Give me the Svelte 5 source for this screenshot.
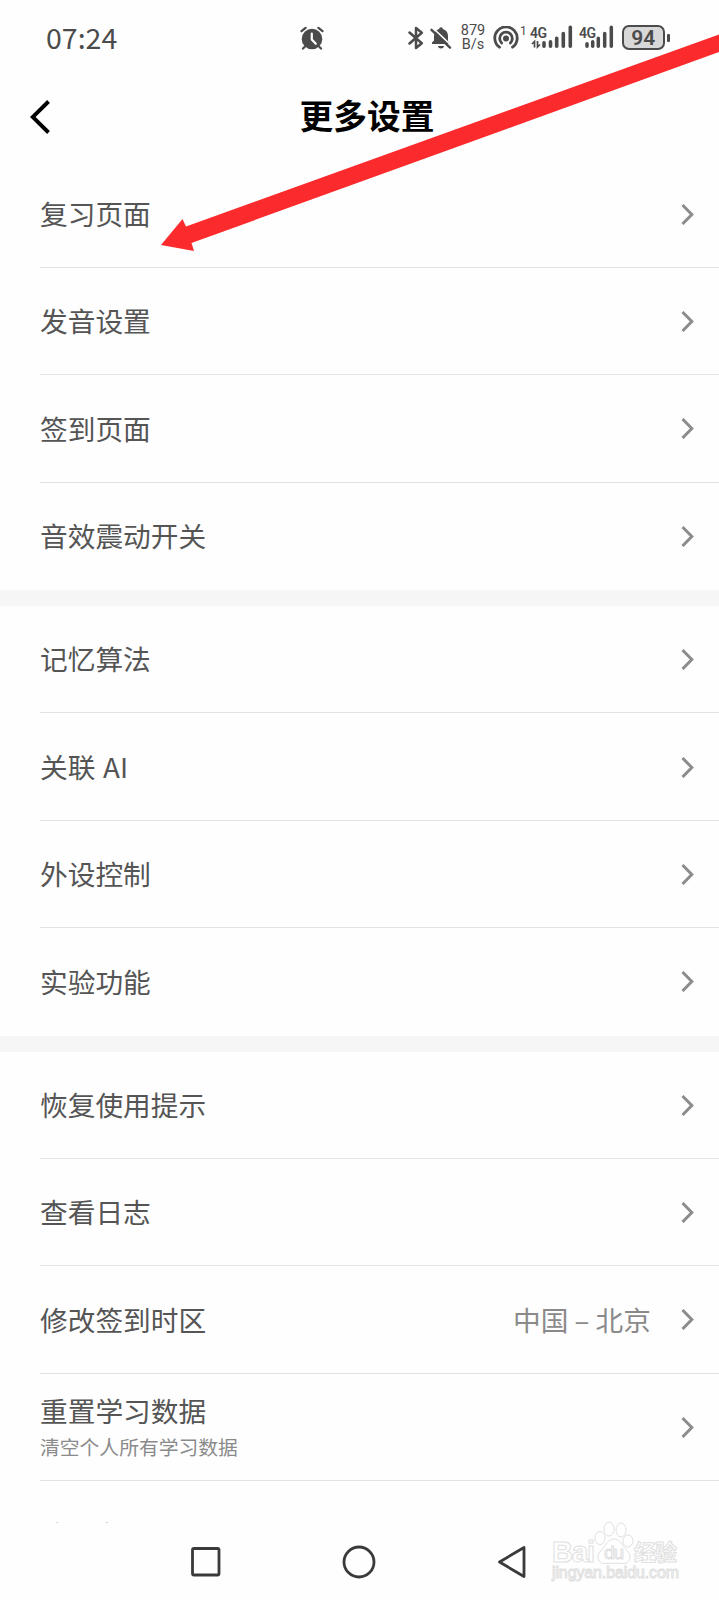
<script lang="ts">
	type Item = { label: string; value?: string; note?: string; partial?: boolean };

	const groups: Item[][] = [
		[{ label: '复习页面' }, { label: '发音设置' }, { label: '签到页面' }, { label: '音效震动开关' }],
		[{ label: '记忆算法' }, { label: '关联 AI' }, { label: '外设控制' }, { label: '实验功能' }],
		[
			{ label: '恢复使用提示' },
			{ label: '查看日志' },
			{ label: '修改签到时区', value: '中国 – 北京' },
			{ label: '重置学习数据', note: '清空个人所有学习数据' },
			{ label: '清缓存', partial: true }
		]
	];
</script>

<div class="screen">
	<header class="status">
		<span class="time">07:24</span>
		<svg class="alarm" width="24" height="24" viewBox="0 0 24 24">
			<circle cx="12" cy="13" r="10.3" fill="#4b4b4b" />
			<path d="M1.5 5.2 5.6 1.8M22.5 5.2 18.4 1.8M5 20.5 3 22.6M19 20.5l2 2.1" stroke="#4b4b4b" stroke-width="2.2" stroke-linecap="round" />
			<path d="M11.8 7.5v6.1l4 4.2" fill="none" stroke="#fff" stroke-width="2.2" stroke-linecap="round" />
		</svg>
		<div class="indicators">
			<svg width="16" height="24" viewBox="0 0 16 24">
				<path d="M1.5 6.5 13.8 17.3 8 22V2l5.8 4.7L1.5 17.5" fill="none" stroke="#4b4b4b" stroke-width="2.5" stroke-linejoin="round" stroke-linecap="round" />
			</svg>
			<svg class="bell" width="22" height="24" viewBox="0 0 22 24">
				<path d="M11 1.2c1.2 0 1.8.8 1.8 1.8 3.4.9 5.2 3.4 5.2 7v5l2 3H2v-1.4l2-2V10c0-3.6 1.8-6.1 5.2-7 0-1 .6-1.8 1.8-1.8z" fill="#4b4b4b" />
				<path d="M8 20h6c-.4 1.8-1.4 2.5-3 2.5S8.4 21.8 8 20z" fill="#4b4b4b" />
				<path d="M3.500 2.500 22 20.200" stroke="#fff" stroke-width="1.600" />
				<path d="M1.5 3.8 20 21.6" stroke="#4b4b4b" stroke-width="2.4" stroke-linecap="round" />
			</svg>
			<span class="speed"><span>879</span><span>B/s</span></span>
			<svg class="hotspot" width="26" height="24" viewBox="0 0 26 24">
				<g fill="none" stroke="#4b4b4b" stroke-width="2.8" stroke-linecap="round">
					<path d="M6.5 21.2a11.2 11.2 0 1 1 13 0" />
					<path d="M8.6 16.9a6.3 6.3 0 1 1 8.8 0" />
				</g>
				<circle cx="13" cy="12.5" r="3" fill="#4b4b4b" />
			</svg>
			<sup class="count">1</sup>
			<svg class="signal" width="44" height="28" viewBox="0 0 44 28">
				<text x="0" y="13.5" font-size="14" textLength="17">4G</text>
				<path d="M4.5 23.5v-6L2 20M7.5 17v6l2.5-2.5" fill="none" stroke="#4b4b4b" stroke-width="1.7" />
				<path d="M14 22.2v-3.5M20.5 22.2v-4.5M26.7 22.2v-8M33.3 22.2V9.5M40.3 22.2V3.3" stroke="#4b4b4b" stroke-width="3.6" stroke-linecap="round" />
			</svg>
			<svg class="signal second" width="36" height="28" viewBox="0 0 36 28">
				<text x="0" y="13.5" font-size="14" textLength="17">4G</text>
				<path d="M8 22.2v-2.5M13.7 22.2v-4.5M19.3 22.2v-8M25.7 22.2V9.5M32.3 22.2V3.3" stroke="#4b4b4b" stroke-width="3.5" stroke-linecap="round" />
			</svg>
			<span class="battery">94</span>
			<span class="nub"></span>
		</div>
	</header>

	<nav class="titlebar">
		<svg width="20" height="34" viewBox="0 0 20 34">
			<path d="M18.5 1.5 2.7 17l15.8 15.5" fill="none" stroke="#000" stroke-width="3.9" />
		</svg>
		<h1>更多设置</h1>
	</nav>

	<main>
		{#each groups as group}
			<section>
				{#each group as item}
					<div class="row" class:partial={item.partial}>
						<div class="label">
							<span>{item.label}</span>
							{#if item.note}<small>{item.note}</small>{/if}
						</div>
						{#if item.value}<span class="value">{item.value}</span>{/if}
						<svg width="14" height="22" viewBox="0 0 14 22">
							<path d="M1.5 2 10.800 11.500 1.500 21" fill="none" stroke="#8c8c8c" stroke-width="3" />
						</svg>
					</div>
				{/each}
			</section>
		{/each}
	</main>

	<footer>
		<svg width="30" height="30" viewBox="0 0 30 30">
			<rect x="1.5" y="1.5" width="26.5" height="26.5" rx="1.5" />
		</svg>
		<svg width="34" height="34" viewBox="0 0 34 34">
			<circle cx="17" cy="17" r="15" />
		</svg>
		<svg width="30" height="34" viewBox="0 0 30 34">
			<path d="M27 2.5v29L2.5 17z" stroke-linejoin="round" />
		</svg>
	</footer>

	<svg class="arrow" width="719" height="260" viewBox="0 0 719 260">
		<path d="M161 245 182.5 219l3.5 7.5L719 34.5V52L191.5 243l2.5 8z" fill="#fb2b2d" />
	</svg>

	<svg class="watermark" width="140" height="70" viewBox="0 0 140 70">
		<g fill="#fff" stroke="#e0e0e0" stroke-width="1">
			<text x="1" y="41" font-size="29" font-weight="bold" textLength="43">Bai</text>
			<ellipse cx="49" cy="17" rx="5" ry="6.5" />
			<ellipse cx="58" cy="8" rx="5" ry="7" />
			<ellipse cx="70" cy="9" rx="5" ry="7" />
			<ellipse cx="77" cy="20" rx="5" ry="6" />
			<path d="M63 18c5 0 7 4 10 8s6 6 6 10c0 5-4 7-8 6.5-5-.5-11-.5-16 0-5 .5-8-2-8-6.5 0-4 3-6 6-10s5-8 10-8z" />
			<text x="53" y="38" font-size="19" textLength="20">du</text>
			<text class="cjk" x="83" y="39" font-size="22" font-weight="bold" textLength="43">经验</text>
			<text x="1" y="57" font-size="16" textLength="127">jingyan.baidu.com</text>
		</g>
	</svg>
</div>

<style>
	:global(body) {
		margin: 0;
		background: #fefefe;
	}

	.screen {
		position: relative;
		display: flex;
		flex-direction: column;
		width: 719px;
		height: 1600px;
		overflow: hidden;
		background: #fefefe;
		font-family: 'Noto Sans CJK SC', sans-serif;
		color: #555;
	}

	.status {
		display: flex;
		align-items: center;
		height: 75px;
		flex: none;
		padding-left: 46px;
		box-sizing: border-box;
		font-family: Roboto, sans-serif;
		color: #4b4b4b;
	}

	.time {
		width: 254px;
		margin-top: -2px;
		font-family: 'Noto Sans CJK SC', sans-serif;
		font-size: 28.5px;
		line-height: 40px;
	}

	.indicators {
		display: flex;
		align-items: center;
		margin-left: 84px;
	}

	.bell {
		margin-left: 6px;
	}

	.speed {
		display: flex;
		flex-direction: column;
		align-items: center;
		width: 24px;
		margin-left: 9px;
		font-size: 14.5px;
		line-height: 14px;
	}

	.hotspot {
		margin-left: 8px;
	}

	.count {
		margin: -14px 0 0 1px;
		font-size: 12px;
		line-height: 12px;
	}

	.signal {
		margin-left: 3px;
		font-family: Roboto, sans-serif;
		font-weight: 600;
		fill: #4b4b4b;
	}

	.second {
		margin-left: 5px;
	}

	.battery {
		width: 43px;
		height: 25px;
		margin-left: 7px;
		border: 2px solid #4b4b4b;
		border-radius: 7px;
		box-sizing: border-box;
		background: #d8d8d8;
		font-size: 21px;
		font-weight: 600;
		line-height: 22px;
		text-align: center;
	}

	.nub {
		width: 3px;
		height: 8px;
		margin-left: 2px;
		border-radius: 1px;
		background: #4b4b4b;
	}

	.titlebar {
		display: flex;
		align-items: center;
		height: 85.4px;
		flex: none;
		padding: 0 30px 2px;
		box-sizing: border-box;
	}

	h1 {
		flex: 1;
		margin: -4px 0 0;
		padding-right: 5px;
		font-size: 33.7px;
		font-weight: 700;
		line-height: 44px;
		text-align: center;
		color: #000;
	}

	main {
		flex: 1;
		min-height: 0;
		overflow: hidden;
	}

	section + section {
		border-top: 16px solid #f6f6f6;
	}

	.row {
		display: flex;
		align-items: center;
		height: 107.4px;
		margin-left: 40px;
		padding-right: 24px;
		box-sizing: border-box;
		border-bottom: 1px solid #e2e2e2;
	}

	.row:last-child {
		border-bottom-color: transparent;
	}

	.label {
		display: flex;
		flex: 1;
		flex-direction: column;
		padding-bottom: 1.6px;
		font-size: 27.7px;
		line-height: 40px;
		word-spacing: 1.5px;
	}

	.partial .label {
		padding: 0;
	}

	small {
		margin-top: 2px;
		font-size: 19.8px;
		line-height: 30px;
		color: #8a8a8a;
	}

	.value {
		margin-right: 30px;
		padding-bottom: 1.6px;
		font-size: 27.7px;
		line-height: 40px;
		color: #8a8a8a;
	}

	footer {
		display: flex;
		align-items: center;
		justify-content: space-between;
		height: 77px;
		flex: none;
		padding: 0 192px 0 191px;
		box-sizing: border-box;
	}

	footer svg {
		fill: none;
		stroke: #3a3a3a;
		stroke-width: 2.8px;
	}

	.arrow {
		position: absolute;
		top: 0;
		left: 0;
		pointer-events: none;
	}

	/* sits over the navigation keys in the corner */
	.watermark {
		position: absolute;
		left: 551px;
		top: 1521px;
		font-family: 'Liberation Sans', sans-serif;
		pointer-events: none;
	}

	.cjk {
		font-family: 'Noto Sans CJK SC', sans-serif;
	}
</style>
